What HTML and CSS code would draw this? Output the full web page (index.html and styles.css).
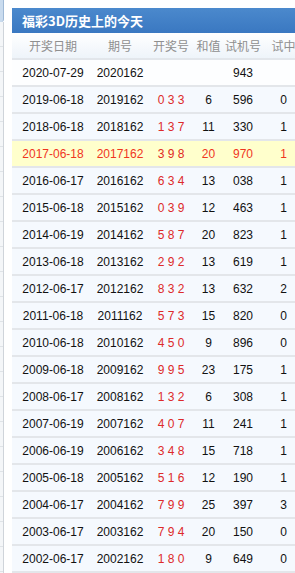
FILE: index.html
```html
<!DOCTYPE html>
<html lang="zh">
<head>
<meta charset="utf-8">
<title>福彩3D历史上的今天</title>
<link rel="stylesheet" href="styles.css">
</head>
<body>
<div class="page">
  <div class="side">
    <div class="side-head"></div>
    <div class="side-body"></div>
  </div>
  <div class="panel">
    <div class="panel-title">福彩3D历史上的今天</div>
    <table class="hist">
      <colgroup>
        <col class="c1"><col class="c2"><col class="c3"><col class="c4"><col class="c5"><col class="c6">
      </colgroup>
      <thead>
        <tr><th>开奖日期</th><th>期号</th><th>开奖号</th><th>和值</th><th>试机号</th><th>试中</th></tr>
      </thead>
      <tbody>
        <tr class="first"><td>2020-07-29</td><td>2020162</td><td class="num"></td><td></td><td>943</td><td></td></tr>
        <tr><td>2019-06-18</td><td>2019162</td><td class="num">0 3 3</td><td>6</td><td>596</td><td>0</td></tr>
        <tr><td>2018-06-18</td><td>2018162</td><td class="num">1 3 7</td><td>11</td><td>330</td><td>1</td></tr>
        <tr class="hl"><td>2017-06-18</td><td>2017162</td><td class="num">3 9 8</td><td>20</td><td>970</td><td>1</td></tr>
        <tr><td>2016-06-17</td><td>2016162</td><td class="num">6 3 4</td><td>13</td><td>038</td><td>1</td></tr>
        <tr><td>2015-06-18</td><td>2015162</td><td class="num">0 3 9</td><td>12</td><td>463</td><td>1</td></tr>
        <tr><td>2014-06-19</td><td>2014162</td><td class="num">5 8 7</td><td>20</td><td>823</td><td>1</td></tr>
        <tr><td>2013-06-18</td><td>2013162</td><td class="num">2 9 2</td><td>13</td><td>619</td><td>1</td></tr>
        <tr><td>2012-06-17</td><td>2012162</td><td class="num">8 3 2</td><td>13</td><td>632</td><td>2</td></tr>
        <tr><td>2011-06-18</td><td>2011162</td><td class="num">5 7 3</td><td>15</td><td>820</td><td>0</td></tr>
        <tr><td>2010-06-18</td><td>2010162</td><td class="num">4 5 0</td><td>9</td><td>896</td><td>0</td></tr>
        <tr><td>2009-06-18</td><td>2009162</td><td class="num">9 9 5</td><td>23</td><td>175</td><td>1</td></tr>
        <tr><td>2008-06-17</td><td>2008162</td><td class="num">1 3 2</td><td>6</td><td>308</td><td>1</td></tr>
        <tr><td>2007-06-19</td><td>2007162</td><td class="num">4 0 7</td><td>11</td><td>241</td><td>1</td></tr>
        <tr><td>2006-06-19</td><td>2006162</td><td class="num">3 4 8</td><td>15</td><td>718</td><td>1</td></tr>
        <tr><td>2005-06-18</td><td>2005162</td><td class="num">5 1 6</td><td>12</td><td>190</td><td>1</td></tr>
        <tr><td>2004-06-17</td><td>2004162</td><td class="num">7 9 9</td><td>25</td><td>397</td><td>3</td></tr>
        <tr><td>2003-06-17</td><td>2003162</td><td class="num">7 9 4</td><td>20</td><td>150</td><td>0</td></tr>
        <tr><td>2002-06-17</td><td>2002162</td><td class="num">1 8 0</td><td>9</td><td>649</td><td>0</td></tr>
      </tbody>
    </table>
  </div>
</div>
</body>
</html>
```
FILE: styles.css
```css
html, body {
  margin: 0;
  padding: 0;
  background: #ffffff;
  overflow: hidden;
}
body {
  width: 295px;
  height: 573px;
  font-family: "Liberation Sans", "Noto Sans CJK SC", Arial, sans-serif;
}
.page {
  display: flex;
  gap: 8px;
  height: 573px;
}
.side {
  width: 4px;
  flex: none;
  display: flex;
  flex-direction: column;
}
.side-head {
  height: 22px;
  background: #c9dbee;
  border-right: 1px solid #9fb9d6;
  border-bottom-right-radius: 3px;
  box-sizing: border-box;
}
.side-body {
  flex: 1;
  box-sizing: border-box;
  border-right: 1px solid #cfd4da;
  background: repeating-linear-gradient(#f4f6f8 0 24px, #dfe3e7 24px 25px);
}
.panel {
  flex: 1;
  min-width: 0;
  overflow: hidden;
  padding-top: 8px;
}
.panel-title {
  height: 25px;
  line-height: 25px;
  padding-left: 10px;
  background: linear-gradient(#4b89cd, #3a78c1);
  color: #ffffff;
  font-size: 13px;
  font-weight: bold;
  font-family: "Noto Sans CJK SC", "Liberation Sans", sans-serif;
}
.hist {
  border-collapse: collapse;
  table-layout: fixed;
  width: 290px;
  font-size: 12px;
}
.c1 { width: 82px; }
.c2 { width: 52px; }
.c3 { width: 50px; }
.c4 { width: 25px; }
.c5 { width: 44px; }
.c6 { width: 37px; }
.hist th {
  height: 25px;
  padding: 0;
  font-weight: normal;
  color: #8f8f8f;
  white-space: nowrap;
  background: linear-gradient(#ffffff, #eef4fa);
  border-bottom: 2px solid #e2e6eb;
  font-family: "Noto Sans CJK SC", "Liberation Sans", sans-serif;
}
.hist td {
  height: 25px;
  padding: 0;
  text-align: center;
  color: #111;
  white-space: nowrap;
  background: #f5f9fe;
  border-bottom: 2px solid #e3e6ea;
}
.hist tr.first td {
  background: #fdfeff;
}
.hist td.num {
  color: #dd2a2a;
}
.hist tr.hl td {
  background: #ffffcc;
  color: #f0361e;
}
.hist tr.hl td.num {
  color: #e02a24;
}
```
